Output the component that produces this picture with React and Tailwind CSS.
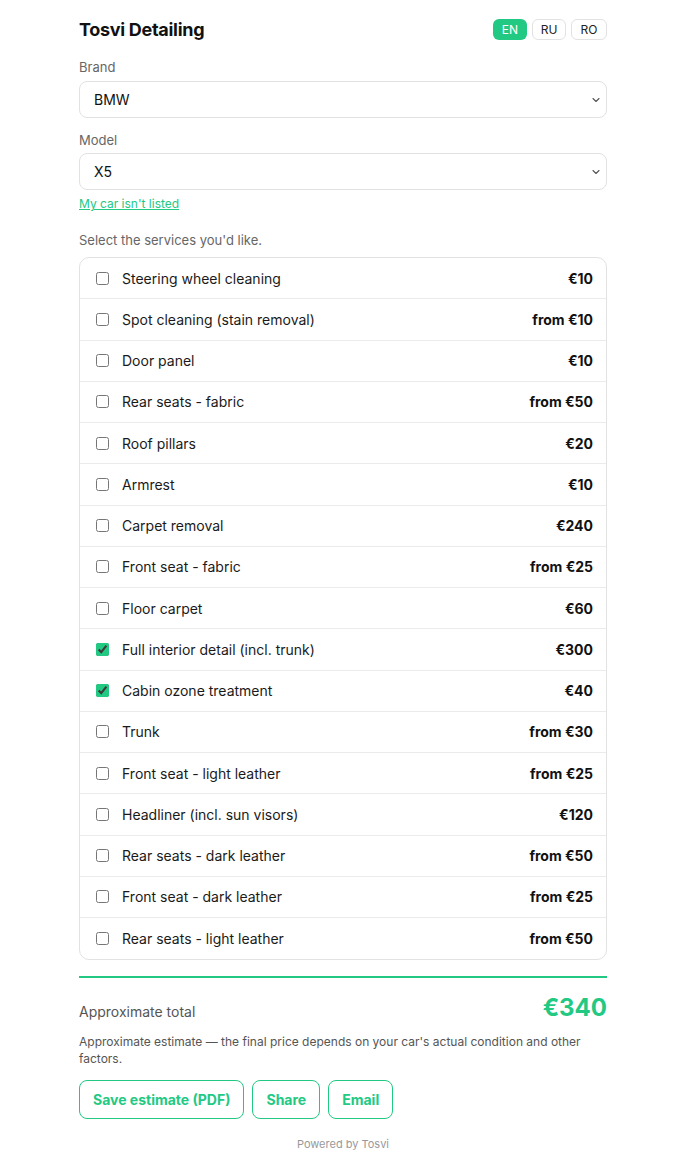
import { useState } from "react"

const GREEN = "#22c983"

const services = [
  { name: "Steering wheel cleaning", price: "€10" },
  { name: "Spot cleaning (stain removal)", price: "from €10" },
  { name: "Door panel", price: "€10" },
  { name: "Rear seats - fabric", price: "from €50" },
  { name: "Roof pillars", price: "€20" },
  { name: "Armrest", price: "€10" },
  { name: "Carpet removal", price: "€240" },
  { name: "Front seat - fabric", price: "from €25" },
  { name: "Floor carpet", price: "€60" },
  { name: "Full interior detail (incl. trunk)", price: "€300", checked: true },
  { name: "Cabin ozone treatment", price: "€40", checked: true },
  { name: "Trunk", price: "from €30" },
  { name: "Front seat - light leather", price: "from €25" },
  { name: "Headliner (incl. sun visors)", price: "€120" },
  { name: "Rear seats - dark leather", price: "from €50" },
  { name: "Front seat - dark leather", price: "from €25" },
  { name: "Rear seats - light leather", price: "from €50" },
]

function Chevron() {
  return (
    <svg width="10" height="10" viewBox="0 0 10 10" fill="none">
      <path d="M2 3.5 L5 6.5 L8 3.5" stroke="#555" strokeWidth="1.1" strokeLinecap="round" strokeLinejoin="round" />
    </svg>
  )
}

function SelectBox({ value }) {
  return (
    <div className="h-[37px] border border-[#e2e2e2] rounded-lg flex items-center justify-between pl-[14px] pr-[5px] text-[14px] text-[#111] bg-white">
      <span>{value}</span>
      <Chevron />
    </div>
  )
}

export default function App() {
  const [checked, setChecked] = useState(services.map(s => !!s.checked))

  const toggle = i => setChecked(c => c.map((v, j) => (j === i ? !v : v)))

  return (
    <div className="min-h-screen bg-white" style={{ fontFamily: "Inter, 'Noto Sans', sans-serif" }}>
      <div className="w-[528px] mx-auto pt-[19px] pb-6">
        {/* Header */}
        <div className="flex items-center justify-between h-[21px]">
          <h1 className="text-[18px] font-bold text-[#111] tracking-[-0.3px]">Tosvi Detailing</h1>
          <div className="flex gap-[5px]">
            <button className="h-[21px] w-[34px] rounded-md text-[12px] text-white bg-[#22c983]">EN</button>
            <button className="h-[21px] w-[34px] rounded-md text-[12px] text-[#222] border border-[#e2e2e2]">RU</button>
            <button className="h-[21px] w-[36px] rounded-md text-[12px] text-[#222] border border-[#e2e2e2]">RO</button>
          </div>
        </div>

        {/* Brand / Model */}
        <div className="mt-[19px] text-[13px] leading-4 text-[#666]">Brand</div>
        <div className="mt-[6px]">
          <SelectBox value="BMW" />
        </div>
        <div className="mt-[14px] text-[13px] leading-4 text-[#666]">Model</div>
        <div className="mt-[5px]">
          <SelectBox value="X5" />
        </div>
        <a href="#" className="block mt-[7px] text-[12px] leading-[14px] underline" style={{ color: GREEN }}>
          My car isn't listed
        </a>

        <div className="mt-[21px] text-[13px] leading-4 text-[#666]">Select the services you'd like.</div>

        {/* Services */}
        <div className="mt-[9px] border border-[#e2e2e2] rounded-[10px] overflow-hidden">
          {services.map((s, i) => (
            <label
              key={s.name}
              className={`flex items-center justify-between h-[41.25px] pl-4 pr-[13px] cursor-pointer ${
                i < services.length - 1 ? "border-b border-[#ebebeb]" : ""
              }`}
            >
              <span className="flex items-center gap-[13px] text-[14px] text-[#1a1a1a]">
                <input
                  type="checkbox"
                  checked={checked[i]}
                  onChange={() => toggle(i)}
                  className="w-[13px] h-[13px] m-0 accent-[#22c983]"
                />
                {s.name}
              </span>
              <span className="text-[14px] font-bold text-[#111]">{s.price}</span>
            </label>
          ))}
        </div>

        {/* Total */}
        <div className="mt-4 h-[2px] bg-[#22c983]" />
        <div className="mt-[15px] flex items-center justify-between">
          <span className="text-[14px] text-[#555] mt-2">Approximate total</span>
          <span className="text-[24px] leading-[29px] font-bold" style={{ color: GREEN }}>€340</span>
        </div>
        <p className="mt-[11px] text-[12px] leading-[17px] text-[#555]">
          Approximate estimate — the final price depends on your car's actual condition and other factors.
        </p>

        <div className="mt-[13px] flex gap-[8px]">
          <button className="h-[39px] px-[13px] rounded-lg border border-[#22c983] text-[14px] font-bold" style={{ color: GREEN }}>
            Save estimate (PDF)
          </button>
          <button className="h-[39px] px-[13px] rounded-lg border border-[#22c983] text-[14px] font-bold" style={{ color: GREEN }}>
            Share
          </button>
          <button className="h-[39px] px-[13px] rounded-lg border border-[#22c983] text-[14px] font-bold" style={{ color: GREEN }}>
            Email
          </button>
        </div>

        <div className="mt-[17px] text-center text-[11px] text-[#999]">Powered by Tosvi</div>
      </div>
    </div>
  )
}
